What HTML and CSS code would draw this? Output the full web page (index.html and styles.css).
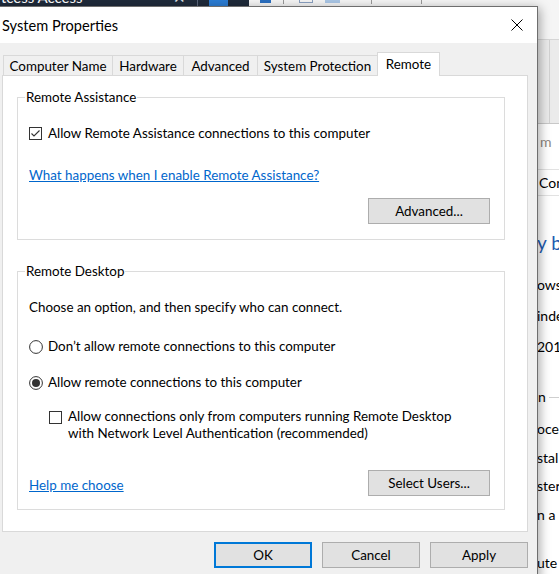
FILE: index.html
```html
<!DOCTYPE html>
<html lang="en">
<head>
<meta charset="utf-8">
<title>System Properties</title>
<link rel="stylesheet" href="styles.css">
</head>
<body>
<div class="desktop">
  <div class="back-dark">
    <span class="back-dark-title">tcess Access</span>
    <span class="back-dark-x">✕</span>
    <span class="back-dark-sep"></span>
    <span class="back-dark-app"></span>
  </div>

  <div class="back-win">
    <div class="bw-toolbar">
      <span class="bw-ico bw-ico-blue"></span>
      <span class="bw-ico bw-ico-line"></span>
      <span class="bw-ico bw-ico-box"></span>
      <span class="bw-ico bw-ico-arrow"></span>
      <span class="bw-ico bw-ico-line bw-ico-far"></span>
      <span class="bw-ico bw-ico-line bw-ico-far2"></span>
    </div>
    <div class="bw-ribbon"><span class="bw-rib-sep"></span></div>
    <div class="bw-doc">
      <div class="bw-tab">m</div>
      <div class="bw-row">Con</div>
      <div class="bw-heading">y ba</div>
      <div class="bw-para bw-para-a">
        <div>ows</div>
        <div>inde</div>
        <div>201</div>
      </div>
      <div class="bw-section"><span>n</span><span class="bw-rule"></span></div>
      <div class="bw-para bw-para-b">
        <div>oce</div>
        <div>stal</div>
        <div>ster</div>
        <div>n a</div>
      </div>
      <div class="bw-last">ute</div>
    </div>
  </div>

  <div class="dialog">
    <div class="titlebar">
      <span class="title">System Properties</span>
      <svg class="close" width="12" height="12" viewBox="0 0 12 12" aria-hidden="true">
        <path d="M0.5 0.5 L11.5 11.5 M11.5 0.5 L0.5 11.5" stroke="#000" stroke-width="1" fill="none"/>
      </svg>
    </div>
    <div class="dlg-body">
      <div class="tabs">
        <div class="tab tab-cn">Computer Name</div>
        <div class="tab tab-hw">Hardware</div>
        <div class="tab tab-adv">Advanced</div>
        <div class="tab tab-sp">System Protection</div>
        <div class="tab tab-remote is-active">Remote</div>
      </div>
      <div class="panel">
        <fieldset class="group group-ra">
          <legend>Remote Assistance</legend>
          <label class="check">
            <svg class="box" width="13" height="13" viewBox="0 0 13 13" aria-hidden="true">
              <rect x="0.5" y="0.5" width="12" height="12" fill="#fff" stroke="#333"/>
              <path d="M2.5 6.5 L5 9 L10.5 3.5" stroke="#333" stroke-width="1.1" fill="none"/>
            </svg>
            <span>Allow Remote Assistance connections to this computer</span>
          </label>
          <div class="link-row"><a class="link" href="#">What happens when I enable Remote Assistance?</a></div>
          <div class="btn-row"><button class="btn btn-wide">Advanced...</button></div>
        </fieldset>

        <fieldset class="group group-rd">
          <legend>Remote Desktop</legend>
          <div class="line">Choose an option, and then specify who can connect.</div>
          <label class="radio radio-1">
            <svg class="box" width="14" height="14" viewBox="0 0 14 14" aria-hidden="true">
              <circle cx="7" cy="7" r="6.4" fill="#fff" stroke="#333"/>
            </svg>
            <span>Don’t allow remote connections to this computer</span>
          </label>
          <label class="radio radio-2">
            <svg class="box" width="14" height="14" viewBox="0 0 14 14" aria-hidden="true">
              <circle cx="7" cy="7" r="6.4" fill="#fff" stroke="#333"/>
              <circle cx="7" cy="7" r="4" fill="#333"/>
            </svg>
            <span>Allow remote connections to this computer</span>
          </label>
          <label class="check check-nla">
            <svg class="box" width="13" height="13" viewBox="0 0 13 13" aria-hidden="true">
              <rect x="0.5" y="0.5" width="12" height="12" fill="#fff" stroke="#333"/>
            </svg>
            <span>Allow connections only from computers running Remote Desktop<br>with Network Level Authentication (recommended)</span>
          </label>
          <div class="foot-row">
            <a class="link" href="#">Help me choose</a>
            <button class="btn btn-wide">Select Users...</button>
          </div>
        </fieldset>
      </div>
      <div class="dlg-buttons">
        <button class="btn btn-dlg btn-default">OK</button>
        <button class="btn btn-dlg">Cancel</button>
        <button class="btn btn-dlg">Apply</button>
      </div>
    </div>
  </div>
</div>
</body>
</html>
```
FILE: styles.css
```css
* { box-sizing: border-box; }
html, body { margin: 0; padding: 0; }
body {
  width: 559px;
  height: 574px;
  overflow: hidden;
  font-family: Lato, "Liberation Sans", sans-serif;
  font-size: 13.4px;
  color: #000;
}
.desktop {
  position: relative;
  width: 559px;
  height: 574px;
  overflow: hidden;
  background: #fff;
}

/* ---------- window behind, left (dark title bar) ---------- */
.back-dark {
  position: absolute;
  left: 0;
  top: 0;
  width: 249px;
  height: 6px;
  overflow: hidden;
  background: #1f2a3a;
  color: #fff;
  display: flex;
  align-items: flex-start;
}
.back-dark-title {
  margin: -11px 0 0 1px;
  font-size: 15px;
  line-height: 16px;
  white-space: nowrap;
  width: 172px;
}
.back-dark-x {
  margin-top: -11px;
  font-size: 15px;
  line-height: 16px;
  color: #dfe3e8;
  width: 24px;
}
.back-dark-sep {
  width: 1px;
  height: 6px;
  background: #59647a;
  margin-right: 11px;
}
.back-dark-app {
  width: 19px;
  height: 6px;
  background: #2b7cd3;
}

/* ---------- window behind, right ---------- */
.back-win {
  position: absolute;
  left: 249px;
  top: 0;
  right: 0;
  bottom: 0;
  display: flex;
  flex-direction: column;
  background: #fff;
}
.bw-toolbar {
  height: 40px;
  background: #f5f5f5;
  border-bottom: 1px solid #d6d6d6;
  display: flex;
  align-items: flex-start;
}
.bw-ico { height: 3px; }
.bw-ico-blue { width: 11px; background: #2b6fc0; margin-left: 11px; }
.bw-ico-line { width: 1px; height: 4px; background: #9a9a9a; margin-left: 12px; }
.bw-ico-box { width: 14px; border: 1px solid #8aa0c0; border-top: 0; margin-left: 15px; }
.bw-ico-arrow { width: 15px; background: #a9c6e6; margin-left: 12px; }
.bw-ico-far { margin-left: 31px; }
.bw-ico-far2 { margin-left: 49px; }
.bw-ribbon {
  height: 84px;
  background: #ebebeb;
  border-bottom: 1px solid #c8c8c8;
  display: flex;
}
.bw-rib-sep {
  margin-left: 300px;
  width: 1px;
  background: #d2d2d2;
}
.bw-doc {
  padding-left: 288px;
  font-size: 14px;
  line-height: 16px;
  white-space: nowrap;
}
.bw-tab { margin-top: 10px; color: #8d8680; padding-left: 3px; }
.bw-row {
  margin-top: 19px;
  margin-left: -288px;
  padding-left: 290px;
  border-top: 1px solid #e2e2e2;
  border-bottom: 1px solid #e2e2e2;
  line-height: 25px;
}
.bw-heading {
  margin-top: 34px;
  font-size: 19px;
  line-height: 26px;
  color: #1e5bb0;
  padding-left: 0;
}
.bw-para { line-height: 31px; }
.bw-para-a { margin-top: 13px; }
.bw-section {
  margin-top: 27px;
  display: flex;
  align-items: center;
  line-height: 16px;
  padding-left: 1px;
}
.bw-rule { flex: 1; height: 1px; background: #cfcfcf; margin-left: 3px; }
.bw-para-b { margin-top: 10px; line-height: 28.5px; }
.bw-last { margin-top: 26px; }

/* ---------- dialog ---------- */
.dialog {
  position: absolute;
  left: -1px;
  top: 6px;
  width: 539px;
  border: 1px solid #6e6e6e;
  background: #f0f0f0;
  box-shadow: 2px 2px 10px rgba(0, 0, 0, 0.34);
  padding-bottom: 12px;
}
.titlebar {
  height: 36px;
  background: #fff;
  display: flex;
  align-items: center;
  justify-content: space-between;
  padding: 0 14px 0 2px;
}
.title {
  font-size: 14.6px;
  line-height: 18px;
  margin-top: 1px;
}
.close { display: block; }

.dlg-body { padding: 9px 9px 0 2px; }

.tabs {
  display: flex;
  align-items: flex-end;
  height: 24px;
  margin-bottom: -1px;
  padding-left: 1px;
  position: relative;
  z-index: 1;
}
.tab {
  height: 20px;
  margin-bottom: 1px;
  border: 1px solid #d9d9d9;
  border-bottom: 0;
  margin-left: -1px;
  display: flex;
  align-items: center;
  justify-content: center;
  line-height: 16px;
  white-space: nowrap;
  background: #f0f0f0;
  padding-top: 1px;
}
.tab:first-child { margin-left: 0; }
.tab-cn { width: 110px; }
.tab-hw { width: 72px; }
.tab-adv { width: 75px; }
.tab-sp { width: 121px; }
.tab-remote { width: 63px; }
.tab.is-active {
  height: 24px;
  margin-bottom: 0;
  background: #fff;
  padding-top: 0;
  padding-bottom: 2px;
}

.panel {
  background: #fff;
  border: 1px solid #d9d9d9;
}

.group {
  margin: 13px 22px 0 14px;
  padding: 20px 14px 15px 11px;
  border: 1px solid #dcdcdc;
  min-width: 0;
}
.group legend {
  padding: 0 1px;
  margin-left: -4px;
  line-height: 16px;
}
.group-rd {
  margin-top: 23px;
  margin-bottom: 21px;
  padding-top: 20px;
  padding-bottom: 13px;
}

.check, .radio {
  display: flex;
  align-items: center;
  gap: 6px;
  line-height: 17px;
}
.radio { gap: 5px; }
.box { display: block; flex: none; }
.line { line-height: 17px; }
.radio-1 { margin-top: 22px; }
.radio-2 { margin-top: 19px; }
.check-nla {
  margin-top: 17px;
  margin-left: 20px;
  align-items: flex-start;
}
.check-nla .box { margin-top: 3px; }

.link-row { margin-top: 25px; line-height: 17px; }
.link {
  color: #0066cc;
  text-decoration: underline;
  line-height: 17px;
}
.btn-row {
  margin-top: 14px;
  display: flex;
  justify-content: flex-end;
}
.foot-row {
  margin-top: 28px;
  display: flex;
  justify-content: space-between;
  align-items: flex-end;
}
.foot-row .link { margin-bottom: 2px; }

.btn {
  font: inherit;
  color: #000;
  background: #e1e1e1;
  border: 1px solid #adadad;
  height: 26px;
  padding: 0;
  margin: 0;
  line-height: 16px;
}
.btn-wide { width: 122px; }

.dlg-buttons {
  margin-top: 10px;
  display: flex;
  justify-content: flex-end;
  gap: 10px;
}
.btn-dlg { width: 98px; }
.btn-default { border: 2px solid #0078d7; }
```
